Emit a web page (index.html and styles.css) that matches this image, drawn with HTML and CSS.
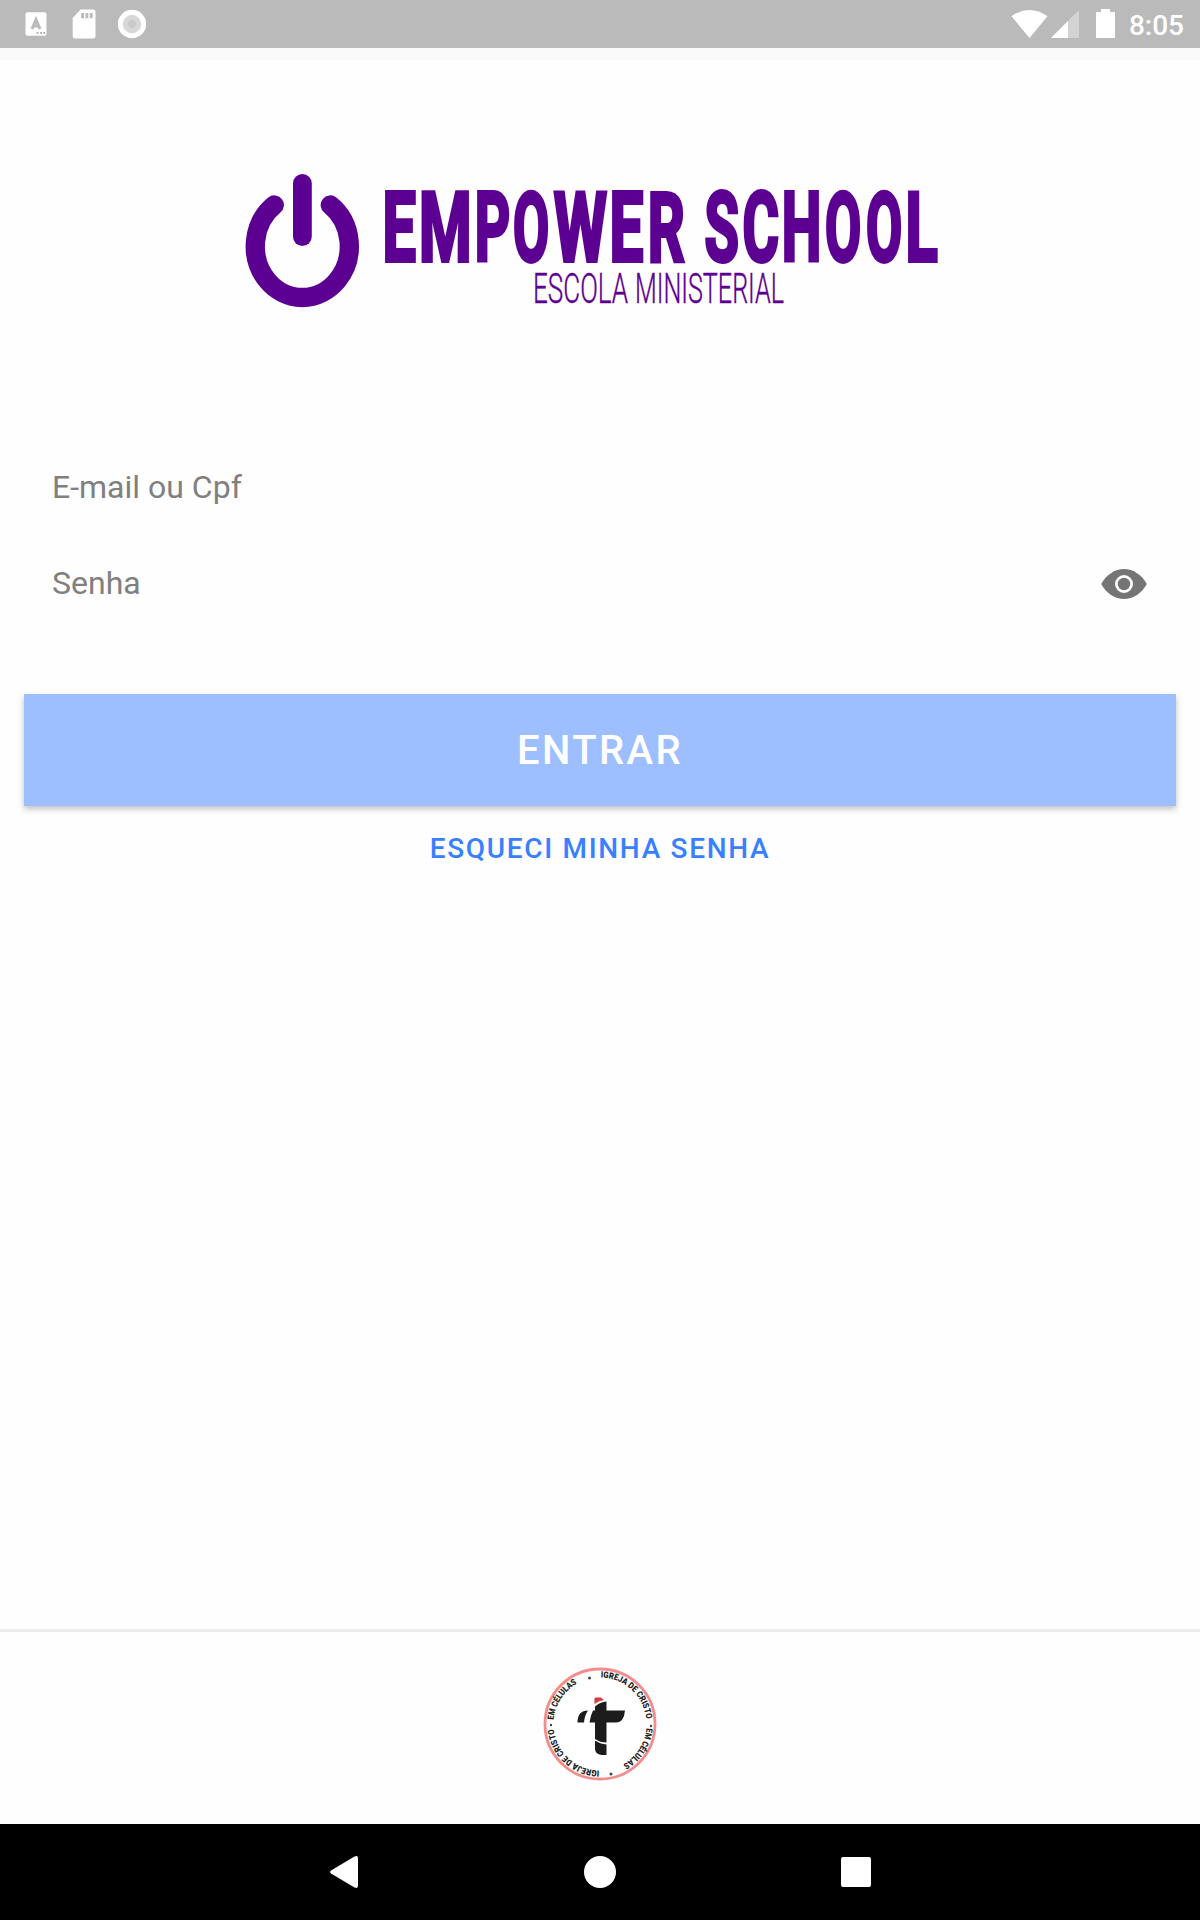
FILE: index.html
```html
<!DOCTYPE html>
<html lang="pt-BR">
<head>
<meta charset="utf-8">
<title>Empower School</title>
<link rel="stylesheet" href="styles.css">
</head>
<body>
<div class="screen">
  <header class="status">
    <svg class="status-left" width="160" height="48" viewBox="0 0 160 48">
      <rect x="25.5" y="12.3" width="21" height="23.4" rx="2" fill="#fff"/>
      <path d="M32 29l4-9.500 4 9.500M33.500 26h5" fill="none" stroke="#bababa" stroke-width="3"/>
      <path d="M36.500 32h2v2h-2zM40 32h2v2h-2zM43.200 32h2v2h-2z" fill="#bababa"/>
      <path d="M80.500 9.600H93a2.500 2.500 0 0 1 2.500 2.500v23.800a2.500 2.500 0 0 1-2.500 2.500H75.200a2.500 2.500 0 0 1-2.500-2.500V18z" fill="#fff"/>
      <path d="M81.200 13h2.800v5.200h-2.800zM85.500 13h2.800v5.200h-2.800zM89.800 13h2.800v5.200h-2.800z" fill="#bababa"/>
      <circle cx="132" cy="24" r="14.200" fill="#fff"/>
      <circle cx="132" cy="24" r="9.200" fill="#d8d8d8"/>
      <circle cx="132" cy="24" r="4.200" fill="#cbcbcb"/>
    </svg>
    <div class="status-right">
      <svg width="106" height="48" viewBox="1010 0 106 48">
        <path d="M1011.500 16.200Q1029.500 4 1047.500 16.200L1029.500 38z" fill="#fff"/>
        <path d="M1079 10v28h-28z" fill="#d3d3d3"/>
        <path d="M1068 21v17h-17z" fill="#fff"/>
        <path d="M1101 9h9v3h5v26h-19V12h5z" fill="#fff"/>
      </svg>
      <span class="clock">8:05</span>
    </div>
  </header>
  <div class="strip"></div>
  <main class="content">
    <svg class="logo" width="720" height="160" viewBox="230 160 720 160" fill="#5c0091">
      <path d="M274.300 205A47 51.300 0 1 0 330.300 205" fill="none" stroke="#5c0091" stroke-width="19.300" stroke-linecap="round"/>
      <rect x="293" y="174" width="18.800" height="72" rx="9.400"/>
      <text class="brand" y="261"><tspan x="382.6" textLength="33.4" lengthAdjust="spacingAndGlyphs">E</tspan><tspan x="419" textLength="52.6" lengthAdjust="spacingAndGlyphs">M</tspan><tspan x="474.8" textLength="35.4" lengthAdjust="spacingAndGlyphs">P</tspan><tspan x="513" textLength="36.2" lengthAdjust="spacingAndGlyphs">O</tspan><tspan x="553.7" textLength="53.2" lengthAdjust="spacingAndGlyphs">W</tspan><tspan x="609.5" textLength="33.9" lengthAdjust="spacingAndGlyphs">E</tspan><tspan x="647.7" textLength="37" lengthAdjust="spacingAndGlyphs">R</tspan></text>
      <text class="brand" y="261"><tspan x="704.6" textLength="34.4" lengthAdjust="spacingAndGlyphs">S</tspan><tspan x="742.4" textLength="36.5" lengthAdjust="spacingAndGlyphs">C</tspan><tspan x="781.7" textLength="39.6" lengthAdjust="spacingAndGlyphs">H</tspan><tspan x="825" textLength="36.2" lengthAdjust="spacingAndGlyphs">O</tspan><tspan x="866" textLength="36.2" lengthAdjust="spacingAndGlyphs">O</tspan><tspan x="905.4" textLength="32.2" lengthAdjust="spacingAndGlyphs">L</tspan></text>
      <text class="tagline" x="533" y="303.3" textLength="95" lengthAdjust="spacingAndGlyphs">ESCOLA</text>
      <text class="tagline" x="635" y="303.3" textLength="149" lengthAdjust="spacingAndGlyphs">MINISTERIAL</text>
    </svg>
    <form class="form">
      <label class="field">E-mail ou Cpf</label>
      <label class="field">Senha
        <svg width="46" height="32" viewBox="1101 567 46 32">
          <path d="M1101.200 584C1106 575 1115 569 1124 569s18 6 22.800 15c-4.800 9-13.800 15-22.800 15s-18-6-22.800-15z" fill="#757575"/>
          <circle cx="1124" cy="584" r="7.600" fill="none" stroke="#fff" stroke-width="2.700"/>
        </svg>
      </label>
      <button class="enter" type="button">ENTRAR</button>
      <a class="forgot">ESQUECI MINHA SENHA</a>
    </form>
  </main>
  <footer class="footer">
    <svg width="120" height="120" viewBox="540 1664 120 120">
      <defs>
        <path id="ring" d="M600 1770.500a46.500 46.500 0 1 1 .01 0"/>
      </defs>
      <circle cx="600" cy="1724" r="55" fill="#fff" stroke="#f58c8c" stroke-width="2.800"/>
      <g class="seal">
        <text transform="rotate(1 600 1724)"><textPath href="#ring" textLength="67" lengthAdjust="spacingAndGlyphs">IGREJA DE CRISTO</textPath></text>
        <text transform="rotate(95 600 1724)"><textPath href="#ring" textLength="45" lengthAdjust="spacingAndGlyphs">EM CÉLULAS</textPath></text>
        <text transform="rotate(181 600 1724)"><textPath href="#ring" textLength="67" lengthAdjust="spacingAndGlyphs">IGREJA DE CRISTO</textPath></text>
        <text transform="rotate(275 600 1724)"><textPath href="#ring" textLength="45" lengthAdjust="spacingAndGlyphs">EM CÉLULAS</textPath></text>
      </g>
      <g fill="#444"><circle cx="589.500" cy="1678" r="1.500"/><circle cx="611" cy="1774" r="1.500"/><circle cx="551" cy="1725" r="1.200"/><circle cx="651" cy="1726" r="1.200"/></g>
      <path d="M594.500 1702v-3.500q0-1 1-1h5.500l3 2.500q-5 .5-9.500 4z" fill="#d93a3a"/>
      <path d="M595 1706.500q5-4.500 11.500-5v9h18.500q-1 12-9 12h-9.500v20q-6 0-11.500-3.500v-16.500h-5.500q1-7 3.500-12h2z" fill="#1c1c1c"/>
      <path d="M588 1710.500q-3.500 5-4 12h-6.500q0-12 10.500-12zM595 1740.500q5 3.500 11.500 4v10.500h-5q-6.500-1-6.500-6z" fill="#1c1c1c"/>
    </svg>
  </footer>
  <nav class="nav">
    <svg width="541" height="32" viewBox="330 1856 541 32" fill="#fff">
      <path d="M331 1870.500l23.500-14q3.500-1.500 3.500 2v27q0 3.500-3.500 2l-23.500-14q-1.800-1.500 0-3z"/>
      <circle cx="600" cy="1872" r="16"/>
      <rect x="841" y="1857" width="30" height="30" rx="2"/>
    </svg>
  </nav>
</div>
</body>
</html>
```

FILE: styles.css
```css
body {
  margin: 0;
  font-family: Roboto, "Liberation Sans", sans-serif;
}

.screen {
  display: flex;
  flex-direction: column;
  height: 1920px;
  background: #fefefe;
}

.status {
  display: flex;
  justify-content: space-between;
  height: 48px;
  background: #bababa;
}

.status-right {
  display: flex;
  gap: 13px;
  padding-right: 16px;
}

.clock {
  color: #fff;
  font-size: 28px;
  font-weight: 500;
  line-height: 51px;
}

.strip {
  height: 12px;
  background: #fafafa;
}

.content {
  display: flex;
  flex: 1;
  flex-direction: column;
  padding: 100px 24px 0;
}

.logo {
  margin-left: 206px;
  overflow: visible;
}

.brand {
  font-size: 97px;
  font-weight: 700;
  stroke: #5c0091;
  stroke-width: 4px;
}

.tagline {
  font-size: 43px;
  font-weight: 300;
  stroke: #5c0091;
  stroke-width: 0.4px;
}

.form {
  display: flex;
  flex-direction: column;
  padding-top: 119px;
}

.field {
  display: flex;
  align-items: center;
  justify-content: space-between;
  height: 96px;
  padding: 0 29px 0 28px;
  color: #808080;
  font-size: 32px;
}

.enter {
  height: 112px;
  margin-top: 63px;
  border: 0;
  background: #9dbeff;
  box-shadow: 0 3px 6px rgba(0, 0, 0, 0.25);
  color: #fff;
  font: 500 40px Roboto, "Liberation Sans", sans-serif;
  letter-spacing: 2.4px;
}

.forgot {
  margin-top: 26px;
  color: #3880ff;
  font-size: 28px;
  font-weight: 500;
  letter-spacing: 1.68px;
  line-height: 33px;
  text-align: center;
}

.footer {
  display: flex;
  justify-content: center;
  height: 160px;
  padding-top: 32px;
  border-top: 3px solid #ebebeb;
}

.seal {
  fill: #222;
  font-size: 8.8px;
  font-weight: 900;
}

.nav {
  display: flex;
  align-items: center;
  height: 96px;
  padding-left: 330px;
  background: #000;
}
```
